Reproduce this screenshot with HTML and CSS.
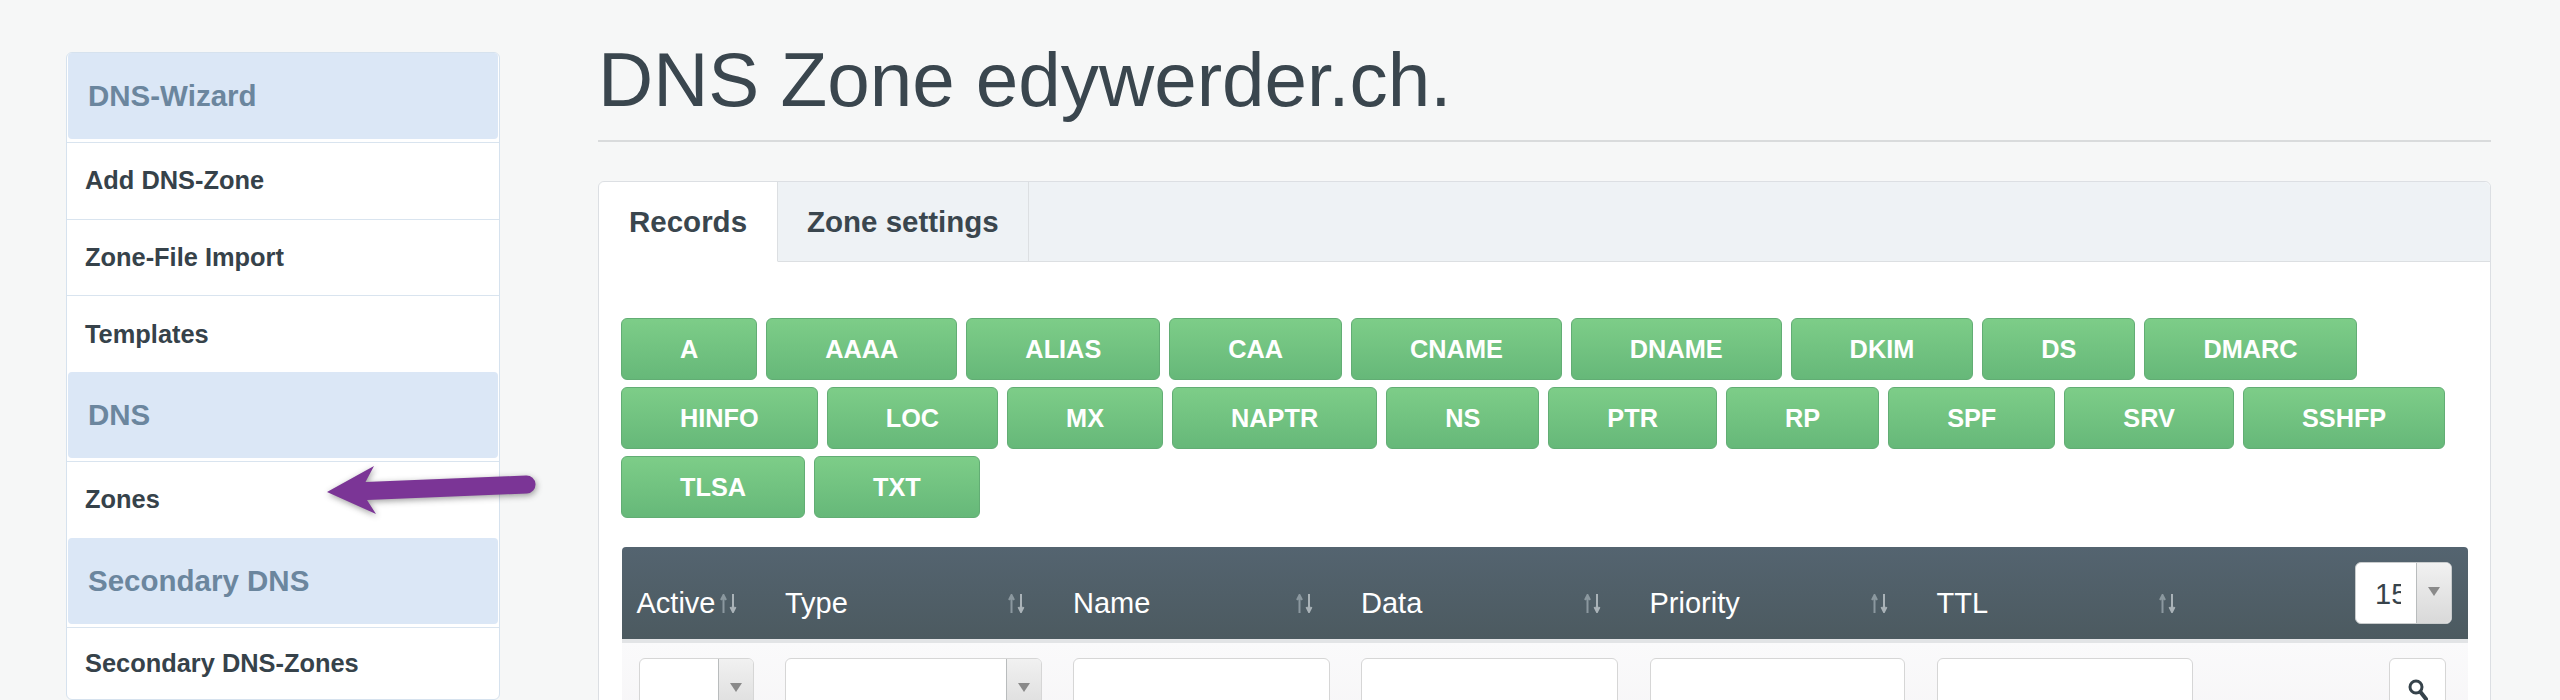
FILE: index.html
```html
<!DOCTYPE html>
<html lang="en">
<head>
<meta charset="utf-8">
<title>DNS Zone edywerder.ch.</title>
<link rel="stylesheet" href="styles.css">
</head>
<body>
<div class="page">
  <aside class="sidebar">
    <h3 class="nav-head">DNS-Wizard</h3>
    <a class="nav-item">Add DNS-Zone</a>
    <a class="nav-item">Zone-File Import</a>
    <a class="nav-item">Templates</a>
    <h3 class="nav-head">DNS</h3>
    <a class="nav-item">Zones</a>
    <h3 class="nav-head">Secondary DNS</h3>
    <a class="nav-item nav-item-last">Secondary DNS-Zones</a>
    <svg class="arrow" width="232" height="76" viewBox="0 0 232 76" aria-hidden="true">
      <path d="M10 30 L57 4 L48.500 20 L209 13.500 A9 9 0 0 1 210 31.500 L50 38 L59 52 Z" fill="#7b3596"/>
    </svg>
  </aside>
  <main class="main">
    <h1 class="title">DNS Zone edywerder.ch.</h1>
    <section class="card">
      <nav class="tabs">
        <a class="tab tab-active">Records</a>
        <a class="tab">Zone settings</a>
      </nav>
      <div class="card-body">
        <div class="types">
          <button class="type">A</button>
          <button class="type">AAAA</button>
          <button class="type">ALIAS</button>
          <button class="type">CAA</button>
          <button class="type">CNAME</button>
          <button class="type">DNAME</button>
          <button class="type">DKIM</button>
          <button class="type">DS</button>
          <button class="type">DMARC</button>
          <button class="type">HINFO</button>
          <button class="type">LOC</button>
          <button class="type">MX</button>
          <button class="type">NAPTR</button>
          <button class="type">NS</button>
          <button class="type">PTR</button>
          <button class="type">RP</button>
          <button class="type">SPF</button>
          <button class="type">SRV</button>
          <button class="type">SSHFP</button>
          <button class="type">TLSA</button>
          <button class="type">TXT</button>
        </div>
        <table class="records">
          <colgroup>
            <col class="c-active"><col class="c-type"><col class="c-name"><col class="c-data"><col class="c-prio"><col class="c-ttl"><col class="c-act">
          </colgroup>
          <thead>
            <tr>
              <th><span class="th-in">Active<svg class="sort" width="18" height="19" viewBox="0 0 18 19"><path class="sort-up" d="M3.500 19V3M1 6l2.500-5L6 6"/><path class="sort-down" d="M13 0v16M10.500 13l2.500 5 2.500-5"/></svg></span></th>
              <th><span class="th-in">Type<svg class="sort" width="18" height="19" viewBox="0 0 18 19"><path class="sort-up" d="M3.500 19V3M1 6l2.500-5L6 6"/><path class="sort-down" d="M13 0v16M10.500 13l2.500 5 2.500-5"/></svg></span></th>
              <th><span class="th-in">Name<svg class="sort" width="18" height="19" viewBox="0 0 18 19"><path class="sort-up" d="M3.500 19V3M1 6l2.500-5L6 6"/><path class="sort-down" d="M13 0v16M10.500 13l2.500 5 2.500-5"/></svg></span></th>
              <th><span class="th-in">Data<svg class="sort" width="18" height="19" viewBox="0 0 18 19"><path class="sort-up" d="M3.500 19V3M1 6l2.500-5L6 6"/><path class="sort-down" d="M13 0v16M10.500 13l2.500 5 2.500-5"/></svg></span></th>
              <th><span class="th-in">Priority<svg class="sort" width="18" height="19" viewBox="0 0 18 19"><path class="sort-up" d="M3.500 19V3M1 6l2.500-5L6 6"/><path class="sort-down" d="M13 0v16M10.500 13l2.500 5 2.500-5"/></svg></span></th>
              <th><span class="th-in">TTL<svg class="sort" width="18" height="19" viewBox="0 0 18 19"><path class="sort-up" d="M3.500 19V3M1 6l2.500-5L6 6"/><path class="sort-down" d="M13 0v16M10.500 13l2.500 5 2.500-5"/></svg></span></th>
              <th class="th-size">
                <div class="select select-size">
                  <span class="select-value">15</span>
                  <span class="select-arrow"><i class="caret"></i></span>
                </div>
              </th>
            </tr>
          </thead>
          <tbody>
            <tr>
              <td class="td-first"><div class="select select-filter"><span class="select-value"></span><span class="select-arrow"><i class="caret"></i></span></div></td>
              <td><div class="select select-filter"><span class="select-value"></span><span class="select-arrow"><i class="caret"></i></span></div></td>
              <td><input class="filter" type="text"></td>
              <td><input class="filter" type="text"></td>
              <td><input class="filter" type="text"></td>
              <td><input class="filter" type="text"></td>
              <td class="td-act">
                <button class="search" aria-label="Search">
                  <svg width="26" height="28" viewBox="0 0 26 28"><circle cx="11" cy="9" r="6" fill="none" stroke="#36434b" stroke-width="3"/><path d="M15.500 14 L21 21" stroke="#36434b" stroke-width="4" stroke-linecap="round"/></svg>
                </button>
              </td>
            </tr>
          </tbody>
        </table>
      </div>
    </section>
  </main>
</div>
</body>
</html>
```
FILE: styles.css
```css
* { box-sizing: border-box; }

html, body {
  margin: 0;
  height: 700px;
  overflow: hidden;
}

body {
  background: #f6f7f7;
  color: #37434b;
  font-family: "Liberation Sans", Arial, sans-serif;
}

.page {
  display: flex;
  align-items: flex-start;
  padding-left: 66px;
}

/* Sidebar */
.sidebar {
  position: relative;
  flex: 0 0 434px;
  margin-top: 52px;
  background: #fff;
  border: 1px solid #d6e2ee;
  border-radius: 6px;
}

.nav-head {
  display: flex;
  align-items: center;
  height: 86px;
  margin: 0 1px 3px;
  padding-left: 20px;
  background: #dbe7f6;
  border-radius: 4px;
  color: #6b869e;
  font-size: 29.500px;
  font-weight: 700;
}

.nav-item {
  display: flex;
  align-items: center;
  height: 76.670px;
  padding-left: 18px;
  border-top: 1px solid #d9e4ef;
  color: #36424a;
  font-size: 25.400px;
  font-weight: 700;
}

.nav-item-last { height: 72px; }

.arrow {
  position: absolute;
  left: 250px;
  top: 409px;
  overflow: visible;
  filter: drop-shadow(1px 2px 3px rgba(40, 40, 40, 0.45));
}

/* Main */
.main {
  flex: 0 0 1893px;
  margin-left: 98px;
  padding-top: 40px;
}

.title {
  margin: 0 0 39px;
  padding: 0 0 20px;
  border-bottom: 2px solid #d9dbdc;
  color: #3a464e;
  font-size: 76.400px;
  font-weight: 400;
  line-height: 80px;
}

.card {
  background: #fff;
  border: 1px solid #dcdfe3;
  border-radius: 6px;
}

.tabs {
  display: flex;
  height: 80px;
  background: #eef2f5;
  border-bottom: 1px solid #dcdfe2;
  border-radius: 6px 6px 0 0;
}

.tab {
  display: flex;
  align-items: center;
  margin-bottom: -1px;
  padding: 0 29px;
  border-right: 1px solid #dcdfe2;
  border-bottom: 1px solid #dcdfe2;
  font-size: 29.500px;
  font-weight: 700;
  color: #3a464e;
}

.tab-active {
  padding: 0 30px;
  width: 179px;
  background: #fff;
  border-bottom-color: #fff;
  border-radius: 6px 0 0 0;
}

.card-body {
  padding: 56px 22px 0;
}

.types {
  display: flex;
  flex-wrap: wrap;
  gap: 7px 9px;
  margin-bottom: 29px;
}

.type {
  height: 62px;
  padding: 0 58px;
  background: linear-gradient(#7dcd88, #66b879);
  border: 1px solid #62ad74;
  border-radius: 6px;
  color: #fff;
  font-family: inherit;
  font-size: 25.300px;
  font-weight: 700;
}

/* Table */
.records {
  width: 1846px;
  margin-left: 1px;
  table-layout: fixed;
  border-collapse: separate;
  border-spacing: 0;
}

.c-active { width: 148.500px; }
.c-type { width: 288px; }
.c-name { width: 288px; }
.c-data { width: 288.500px; }
.c-prio { width: 287px; }
.c-ttl { width: 288px; }
.c-act { width: 258px; }

.records th {
  height: 96px;
  padding: 0 33px 19px 14.500px;
  vertical-align: bottom;
  background: linear-gradient(#546470, #4c5a60);
  border-bottom: 4px solid #e2e4e6;
  color: #fff;
  font-size: 29px;
  font-weight: 400;
  line-height: 34px;
  text-align: left;
}

.records th:first-child { border-top-left-radius: 4px; }

.records th:last-child { border-top-right-radius: 4px; }

.records .th-size {
  padding: 0 16px 0 0;
  vertical-align: middle;
}

.th-in {
  display: flex;
  align-items: center;
  justify-content: space-between;
}

.sort { flex: none; margin-top: 1px; }

.sort path { fill: none; stroke-width: 2; }
.sort-up { stroke: #8b989f; }
.sort-down { stroke: #aab3b8; }

.records td {
  padding: 15px 17px 60px 14.500px;
  background: linear-gradient(#fafafb, #f4f2f4);
  vertical-align: top;
}

.records .td-first { padding-left: 17px; }

.records .td-act {
  padding-right: 22px;
  text-align: right;
}

.filter, .select, .search {
  height: 62px;
  border: 1px solid #d6d6d6;
  border-radius: 6px;
  background: #fff;
}

.filter {
  display: block;
  width: 100%;
}

.select {
  display: flex;
  overflow: hidden;
}

.select-filter { width: 100%; }

.select-size {
  width: 97px;
  margin-left: auto;
  border-color: #c9cccd;
}

.select-value {
  flex: 1;
  overflow: hidden;
  padding: 14px 0 0 19px;
  color: #37434b;
  font-size: 29px;
  line-height: 34px;
  white-space: nowrap;
}

.select-size .select-value {
  flex: 0 0 45px;
  margin-right: 15px;
}

.select-arrow {
  display: flex;
  flex: 0 0 35px;
  justify-content: center;
  padding-top: 24px;
  background: linear-gradient(#f1f1f1, #d9d9d9);
  border-left: 1px solid #b9bcbd;
}

.caret {
  width: 0;
  height: 0;
  border-style: solid;
  border-width: 9px 6px 0;
  border-color: #8a8a8a transparent transparent;
}

.search {
  display: inline-flex;
  align-items: flex-start;
  justify-content: center;
  width: 57px;
  padding: 19px 0 0;
}
```
